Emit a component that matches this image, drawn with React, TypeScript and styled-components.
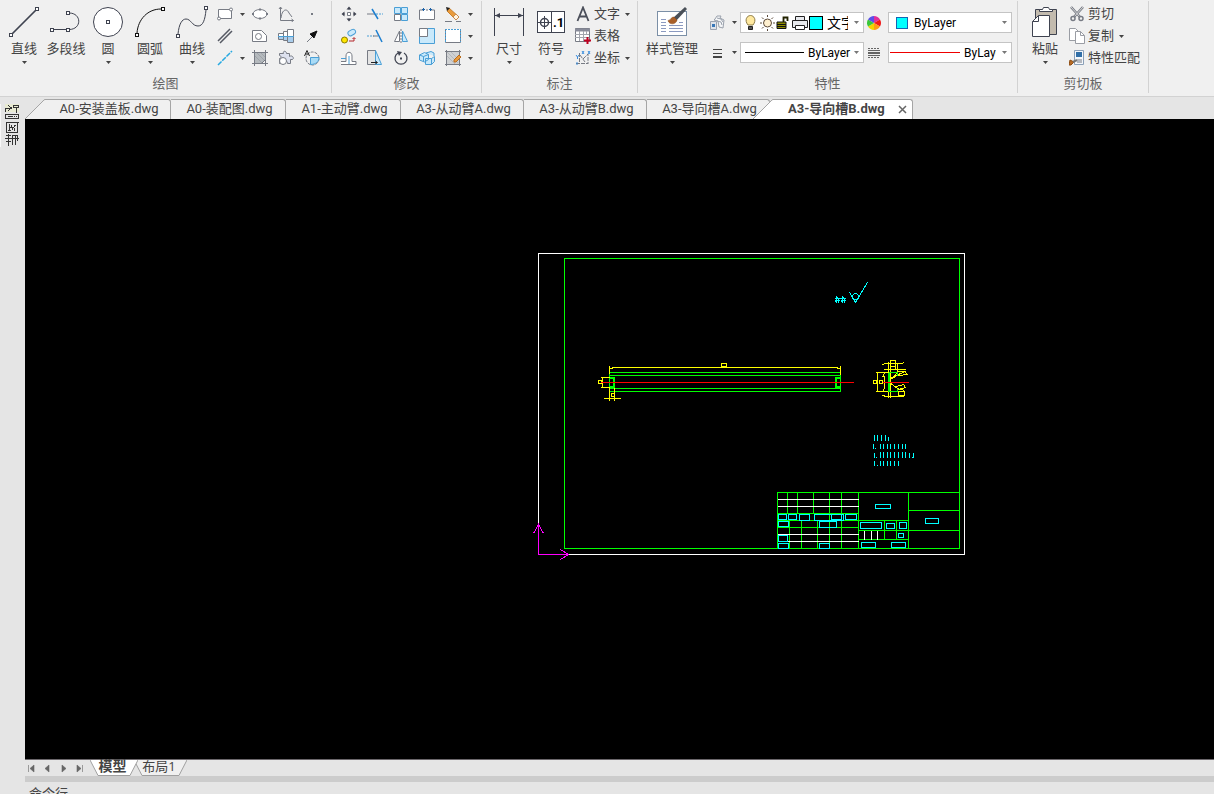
import React from "react";
import styled, { createGlobalStyle } from "styled-components";

const GlobalStyle = createGlobalStyle`
  * { box-sizing: border-box; }
  html, body { margin: 0; padding: 0; }
  body {
    font-family: "Open Sans", "Noto Sans CJK SC", sans-serif;
    font-size: 13px;
    color: #444;
    background: #e5e5e5;
  }
  button, select, input { font: inherit; color: inherit; margin: 0; }
  svg { display: block; flex: none; }
`;

const App = styled.div`
  display: flex;
  flex-direction: column;
  height: 100vh;
  overflow: hidden;
`;

/* ---------- ribbon ---------- */

const Ribbon = styled.header`
  display: flex;
  flex: none;
  background: #f0f0f0;
  border-bottom: 1px solid #d2d2d2;
  padding: 1px 0 3px;
`;

const Group = styled.section<{ $width: number; $inset: number }>`
  width: ${(p) => p.$width}px;
  padding-left: ${(p) => p.$inset}px;
  border-right: 1px solid #d2d2d2;
  display: flex;
  flex-direction: column;
`;

const GroupBody = styled.div`
  display: flex;
  height: 72px;
  padding-top: 2px;
`;

const GroupTitle = styled.h2<{ $inset: number }>`
  margin: 0 0 0 -${(p) => p.$inset}px;
  font-size: 13px;
  font-weight: 400;
  line-height: 20px;
  text-align: center;
  color: #666;
`;

const PlainButton = styled.button`
  background: none;
  border: 0;
  padding: 0;
  display: flex;
  align-items: center;
  white-space: nowrap;
`;

const BigButton = styled(PlainButton)<{ $width?: number }>`
  width: ${(p) => p.$width ?? 42}px;
  flex: none;
  flex-direction: column;
  align-items: center;
  padding-top: 3px;
  line-height: 20px;
  height: 64px;
`;

const BigCaret = styled.span`
  padding-top: 3px;
`;

const ToolGrid = styled.div<{ $columns: string }>`
  display: grid;
  grid-template-columns: ${(p) => p.$columns};
  grid-auto-rows: 22px;
  padding-left: 1px;
`;

const ToolCell = styled.div`
  display: flex;
  align-items: center;
  padding-left: 3px;
`;

const SplitButton = styled(PlainButton)`
  height: 22px;
  padding: 0 3px 0 7px;
`;

const RowList = styled.div`
  display: flex;
  flex-direction: column;
  margin-left: 3px;
`;

const RowButton = styled(PlainButton)`
  height: 22px;
  gap: 3px;
  span { padding-bottom: 4px; }
  svg + span + svg { margin-left: 2px; }
`;

const PropGrid = styled.div`
  display: grid;
  grid-template-columns: 38px 124px 24px 124px;
  grid-auto-rows: 21px;
  row-gap: 9px;
  padding-top: 9px;
`;

const PropTool = styled(PlainButton)<{ $split?: boolean }>`
  justify-content: ${(p) => (p.$split ? "flex-end" : "flex-start")};
  padding: 0 3px;
  gap: 7px;
`;

const Combo = styled.label<{ $inset?: number }>`
  display: flex;
  align-items: center;
  background: #fff;
  border: 1px solid #c4c4c4;
  padding: 0 4px 0 ${(p) => p.$inset ?? 4}px;
  color: #000;
  overflow: hidden;
`;

const ComboSelect = styled.select<{ $size?: number }>`
  appearance: none;
  flex: 1 1 0;
  min-width: 0;
  border: 0;
  padding: 0;
  background: transparent;
  font-family: Roboto, "Noto Sans CJK SC", sans-serif;
  font-size: ${(p) => p.$size ?? 12}px;
  line-height: 18px;
  height: 19px;
`;

const Swatch = styled.span<{ $edge: string; $size: number }>`
  flex: none;
  width: ${(p) => p.$size}px;
  height: ${(p) => p.$size}px;
  background: #0ff;
  border: 1px solid ${(p) => p.$edge};
  margin-right: ${(p) => (p.$size > 12 ? 4 : 6)}px;
`;

const LineSample = styled.span<{ $color: string; $width: number }>`
  flex: none;
  width: ${(p) => p.$width}px;
  height: 1px;
  background: ${(p) => p.$color};
  margin-right: 4px;
`;

const ComboCaret = styled.span`
  margin-left: 6px;
`;

/* ---------- work area ---------- */

const Workspace = styled.div`
  display: flex;
  flex: 1;
  min-height: 0;
`;

const Dock = styled.aside`
  width: 25px;
  flex: none;
  background: #e5e5e5;
  padding: 7px 0 0;
`;

const DockTab = styled(PlainButton)`
  width: 19px;
  height: 43px;
  border-left: 1px solid #f8f8f8;
  justify-content: flex-end;
`;

const Main = styled.main`
  flex: 1;
  min-width: 0;
  display: flex;
  flex-direction: column;
`;

const TabStrip = styled.nav`
  display: flex;
  flex: none;
  height: 22px;
  padding-top: 2px;
  background: #e5e5e5;
`;

const SlopeHolder = styled.span<{ $overlap?: number }>`
  margin-left: -${(p) => p.$overlap ?? 0}px;
  z-index: 1;
`;

const DocTab = styled(PlainButton)<{ $width: number }>`
  width: ${(p) => p.$width}px;
  flex: none;
  justify-content: center;
  height: 20px;
  padding: 0 0 2px 3px;
  line-height: 18px;
  background: #f0f0f0;
  border: 1px solid #a5a5a5;
  border-width: 1px 1px 0 0;
  border-radius: 0 3px 0 0;
  font-family: Roboto, "Noto Sans CJK SC", sans-serif;
`;

const ActiveDoc = styled.div`
  display: flex;
  z-index: 1;
  align-items: center;
  height: 20px;
  background: #fff;
  border: 1px solid #a5a5a5;
  border-width: 1px 1px 0 0;
  border-radius: 0 3px 0 0;
  width: 140px;
  padding: 0 5px 0 15px;
  justify-content: space-between;
`;

const ActiveDocName = styled(PlainButton)`
  font-family: Roboto, "Noto Sans CJK SC", sans-serif;
  font-weight: 700;
  line-height: 18px;
  padding-bottom: 2px;
`;

const Canvas = styled.div`
  flex: 1;
  min-height: 0;
  background: #000;
  svg { width: 100%; height: 100%; }
`;

const SheetBar = styled.nav`
  display: flex;
  flex: none;
  height: 17px;
  background: #e5e5e5;
  border-top: 1px solid #6b676b;
`;

const SheetNav = styled.div`
  display: flex;
  width: 65px;
  button { width: 16px; height: 17px; padding-right: 3px; justify-content: center; }
`;

const SheetTab = styled(PlainButton)<{ $width: number; $active?: boolean }>`
  position: relative;
  width: ${(p) => p.$width}px;
  height: 16px;
  margin-right: -4px;
  padding: 0 3px 4px 0;
  justify-content: center;
  line-height: 14px;
  z-index: ${(p) => (p.$active ? 1 : 0)};
  font-size: ${(p) => (p.$active ? 14 : 13)}px;
  font-weight: ${(p) => (p.$active ? 700 : 400)};
  > svg { position: absolute; left: 0; top: 0; z-index: -1; }
  isolation: isolate;
`;

const Splitter = styled.div`
  flex: none;
  height: 6px;
  background: #ccc;
`;

const CommandBar = styled.footer`
  flex: none;
  height: 12px;
  overflow: hidden;
  padding: 1px 4px 0;
  line-height: 20px;
`;

/* ---------- icons ---------- */

const INK = "#3f4350";
const BLUE = "#4a9fd6";
const PALE = "#c9e9fb";

const Caret = ({ color = "#444" }: { color?: string }) => (
  <svg width="5" height="3" viewBox="0 0 5 3"><path d="M0 0h5L2.5 3z" fill={color} /></svg>
);

const Big = ({ children }: { children: React.ReactNode }) => (
  <svg width="32" height="32" viewBox="0 0 32 32" fill="none" stroke={INK}>{children}</svg>
);

const Small = ({ children, ink = "#777b84" }: { children: React.ReactNode; ink?: string }) => (
  <svg width="16" height="16" viewBox="0 0 16 16" fill="none" stroke={ink}>{children}</svg>
);

const Knot = ({ x, y }: { x: number; y: number }) => (
  <rect x={x - 1.5} y={y - 1.5} width="3" height="3" fill="#fff" shapeRendering="crispEdges" />
);

const big = {
  line: <Big><path d="M3 29L29 3" strokeWidth="1.700" /><Knot x={29} y={3} /><Knot x={3} y={29} /></Big>,
  pline: <Big><path d="M2 23.500H18M19 7C32 7 32 23.500 19 23.500" /><Knot x={18} y={7} /><Knot x={2} y={24} /><Knot x={18} y={24} /></Big>,
  circle: <Big><circle cx="16" cy="16" r="14.500" fill="#fff" /><Knot x={16} y={16} /></Big>,
  arc: <Big><g stroke="#111"><path d="M3 27C4 13 14 3 27 3" /><Knot x={29} y={3} /><Knot x={3} y={29} /></g></Big>,
  spline: <Big><path d="M2 28C3 18 6 13 10 13C15 13 16 20 22 20C27 20 29 14 30 4" /><Knot x={30} y={2} /><Knot x={2} y={30} /></Big>,
  dim: <Big><path d="M1.500 2v28M30.500 2v28M2 9.500h28" /><path d="M2 9.500l5-2.500v5zM30 9.500l-5-2.500v5z" fill={INK} stroke="none" /></Big>,
  symbol: (
    <Big>
      <rect x="2.500" y="5.500" width="27" height="21" fill="#fff" />
      <path d="M16.500 5v22M3 16.500h13M9.500 10v13" /><circle cx="9.500" cy="16.500" r="4" strokeWidth="1.500" />
      <text x="18" y="21" fontSize="13" fontWeight="700" fill="#000" stroke="none" fontFamily="Roboto, sans-serif">.1</text>
    </Big>
  ),
  style: (
    <Big>
      <rect x="1.500" y="5.500" width="29" height="24" fill="#fff" stroke="#7b8fa6" />
      <path d="M5 13.500h5M5 16.500h5M5 19.500h5M5 22.500h5M5 25.500h5M13 19.500h14M13 22.500h14M13 25.500h14M23 16.500h4" stroke="#8b9ac0" />
      <path d="M29 1l-12 11 3 3L31 3z" fill="#4a5058" stroke="none" />
      <path d="M12 14.500c3 0 3-4 6-3.500l3 3c-1 5-8 5-9 .5z" fill="#a9602a" stroke="#8a4a1c" strokeWidth=".5" />
    </Big>
  ),
  paste: (
    <Big>
      <path d="M6.500 3.500h21v25h-21z" fill="#c3bbae" /><path d="M10.500 5.500v-2h3l1-2h5l1 2h3v2z" fill="#fff" />
      <path d="M9.500 9.500h11v21h-17v-15z" fill="#fff" /><path d="M9.500 9.500v6h-6" />
    </Big>
  ),
};

const ic = {
  rect: <Small><path d="M1.500 3.500h13v9h-13z" fill="#fff" /><circle cx="14" cy="3.500" r="1.500" fill="#fff" /><circle cx="2" cy="12.500" r="1.500" fill="#fff" /></Small>,
  ellipse: <Small><ellipse cx="8" cy="8" rx="7" ry="4.500" fill="#fff" /><path d="M7 3.500h2M7 12.500h2M1 7v2M15 7v2" strokeWidth="2" /></Small>,
  curve: <Small><path d="M2.500 1v13.500h13M1 3l1.500-2L4 3M13.500 13l2 1.500-2 1.500M3 12C4 3 9 2 11 7l3 4" /></Small>,
  point: <Small><path d="M7 8h2" strokeWidth="2" /></Small>,
  parallel: <Small ink="#555963"><path d="M1 13L13 1M3 15L15 3" strokeWidth="1.500" /></Small>,
  region: <Small><path d="M.5 2.500h9l5 5v6H.5z" fill="#fff" /><circle cx="6.500" cy="8.500" r="3" /></Small>,
  bolt: <Small><path d="M.5 5.500h5v6h-5zM5.500 3.500h4v9h-4zM9.500 1.500h6v13h-6z" fill="#fff" /><path d="M1 9h4v2H1zM6 9h3v3H6zM10 9h5v5h-5z" fill="#a9cdec" stroke="none" /><path d="M0 8.500h16" stroke={BLUE} /></Small>,
  leader: <Small><path d="M3 14l6-6" /><path d="M13 3L6 6l4 4z" fill="#111" stroke="#111" /></Small>,
  xline: <Small ink="#27a9e1"><path d="M1 15L15 1" strokeWidth="1.500" strokeDasharray="5 1" /></Small>,
  hatch: <Small><path d="M2.500 2.500h11v7l-4 4h-7z" fill="#b4b9bd" /><path d="M2.500 0v16M13.500 0v16M0 2.500h16M0 13.500h16" /><path d="M3 6l7 7M5 3l8 8M9 3l4 4" opacity=".35" /></Small>,
  gear: <Small><path d="M5.500 3.500c-1-3 3-3 3 0h3v3c3-2 5 2 3 3h-2v4h-3c1-3-4-3-3 0h-5v-5c2 0 2-3 0-3v-2z" fill="#dde1ee" /><circle cx="5" cy="11" r="3.500" fill="#fff" /></Small>,
  wipe: <Small><circle cx="8.500" cy="8.500" r="6.500" strokeDasharray="3 1" /><path d="M6.500 7.500H15c0 4-3 7-8.500 7z" fill="#a9dbf6" stroke={BLUE} /><path d="M.5 6L3 .5 5.500 6M1.500 4h3" stroke="#222" /></Small>,
  move: <Small><path d="M6.500 6.500h3v3h-3z" fill="#fff" /><path d="M8 2v2M8 12v2M2 8h2M12 8h2" /><path d="M8 .500l2.500 3h-5zM8 15.500l2.500-3h-5zM.5 8l3-2.500v5zM15.500 8l-3-2.500v5z" fill={INK} stroke="none" /></Small>,
  trim: <Small><path d="M0 8h8" /><path d="M9 8h7" strokeDasharray="2 1" stroke={BLUE} /><path d="M5 3l6 10" stroke="#1d7fd0" strokeWidth="1.500" /></Small>,
  array: <Small><path d="M1.500 1.500h6v6h-6zM8.500 1.500h6v6h-6zM8.500 8.500h6v6h-6z" fill={PALE} stroke={BLUE} /><path d="M1.500 8.500h6v6h-6z" fill="#fff" /></Small>,
  stretch: <Small><path d="M4 4H.5v9.500h15V4H12M7 4h2" fill="#fff" /><path d="M3 3.500h3M10 3.500h3M4.500 2v3M11.500 2v3" stroke="#1d62a8" /></Small>,
  erase: <Small><path d="M0 15.500h7M11 15.500h5" /><path d="M4 2l10 9-3 3L2 5z" fill="#e99b3c" stroke="#c9822f" /><path d="M1 1l4 1-3 3z" fill="#222" stroke="none" /><path d="M11 8l3 3-3 3-3-3z" fill="#fff3df" stroke="#c98a4b" /></Small>,
  copy: <Small><rect x="7" y="2" width="8" height="5" rx="2.500" fill={PALE} stroke={BLUE} transform="rotate(-30 11 5)" /><circle cx="3.500" cy="12" r="3" fill="#ffe600" stroke="#8a7c00" /><path d="M8 13h5v-3M11.500 11l1.500-1.500 1.500 1.500" stroke="#b3262b" /></Small>,
  extend: <Small><path d="M0 8h7" strokeDasharray="2 1" stroke={BLUE} /><path d="M6 8h5" /><path d="M9 2l6 12" stroke="#1d7fd0" strokeWidth="1.500" /></Small>,
  mirror: <Small><path d="M6.500 3v10.500h-5z" fill="#fff" /><path d="M9.500 3v10.500h5z" fill={PALE} stroke={BLUE} /><path d="M8 1v14" strokeDasharray="2 1" /></Small>,
  scale: <Small><path d="M.5.500h15v15H.5z" fill={PALE} stroke={BLUE} /><path d="M.5.500h8v8h-8z" fill="#fff" /></Small>,
  stretchBox: <Small><path d="M.5 1v13.500h15V1" fill="#fff" /><path d="M.5 14V1.500h15V14" strokeDasharray="2 1" stroke={BLUE} /></Small>,
  offset: <Small><path d="M0 14.500h15v-3h-4V6c0-5-6-5-6 0v5.500H0" fill="#fff" /><path d="M0 8.500h5M8 14V6" stroke={BLUE} /></Small>,
  taper: <Small><path d="M.5.500h8v14h-8z" fill="#e4e4e4" /><path d="M8.500.500l6 14h-6z" fill={PALE} stroke={BLUE} /><path d="M4 12.500h6M8.500 11l2 1.500-2 1.500" stroke="#222" /></Small>,
  rotate: <Small ink={INK}><path d="M5 3a6 6 0 1 0 6 0" strokeWidth="1.300" /><path d="M4 1l5 1-3 4z" fill={INK} stroke="none" /><path d="M7 8.500h2" strokeWidth="2" /></Small>,
  blocks: <Small ink={BLUE}><path d="M.5 5l5-2.500 4 2v5l-4 2.500-5-2zM6.500 8.500h6v6h-6zM12.500 8.500l3-2v5l-3 3M7 3l5-1.500 3 1.500v3" fill={PALE} /><path d="M.5 5l4 1.500v5M4.500 6.500l5-2" /></Small>,
  edit: <Small><path d="M1.500 1.500h13v13h-13z" fill="#cfd1d3" /><path d="M0 1.500h16M0 14.500h16M1.500 0v16M14.500 0v16" /><path d="M2 6l8 8M2 2l11 11M6 2l8 8" opacity=".3" /><path d="M14 5l-5 5v2h2l5-5z" fill="#e99b3c" stroke="#b86b1c" /></Small>,
  text: <Small ink="#4b4f5a"><path d="M2.500 15L8 1.500 13.500 15M4.500 10.500h7" strokeWidth="1.800" /></Small>,
  table: <Small><path d="M.5.500h14v13H.5z" fill="#fff" /><path d="M0 2h15" strokeWidth="3" stroke="#888b99" /><path d="M0 6.500h14M0 9.500h14M4.500 3v10M8.500 3v10M11.500 3v4" stroke="#a2a5ad" /><path d="M12.500 9v7M9 12.500h7" stroke="#c00020" strokeWidth="2" /></Small>,
  coord: <Small><path d="M4.500 3v11M1 13.500h12M5 5l5 7M8 9l5-5v10" strokeDasharray="4 1" /><path d="M1 5l1.500 2L4 5M2.500 7v2M7 1l2 3M9 1L7 4M13 1l2 3M15 1l-2 3M2 12v3" stroke="#3b8ede" /></Small>,
  layers: <Small><path d="M6 4l2-3h4l-1 2 4 2-1 8-4-1-1-6-4-1z" fill="#f5f6f8" stroke="#9aa1ac" /><path d="M8 3l4 1 2 3M8 6l4 1 1 3" stroke="#9aa1ac" /><path d="M1.500 6.500h6v8h-6z" fill="#dfe3ea" stroke="#9ba3b0" /><path d="M3 9h3v3H3z" fill="#3877b8" stroke="none" /></Small>,
  lines: <Small ink="#444"><path d="M4 4.500h9M4 8.500h9" /><path d="M4 12h9" strokeWidth="2" /></Small>,
  wheel: (
    <Small ink="none">
      <path d="M7 8V1a7 7 0 0 1 6 3.500z" fill="#e0309a" /><path d="M7 8l6-3.500a7 7 0 0 1 0 7z" fill="#f01818" /><path d="M7 8l6 3.500A7 7 0 0 1 7 15z" fill="#ff9b14" />
      <path d="M7 8v7a7 7 0 0 1-6-3.500z" fill="#f2d400" /><path d="M7 8l-6 3.500a7 7 0 0 1 0-7z" fill="#3ac83a" /><path d="M7 8L1 4.500A7 7 0 0 1 7 1z" fill="#5a50e8" />
    </Small>
  ),
  ltype: <Small ink="#666"><path d="M1 3.500h12M1 12.500h12" strokeDasharray="2 1" /><path d="M1 5.500h12M1 10.500h12" /><path d="M1 8h12" strokeWidth="2" /></Small>,
  cut: <Small><path d="M2 1l9 10M14 1L5 11" strokeWidth="2.600" /><path d="M2 1l9 10M14 1L5 11" strokeWidth=".8" stroke="#eee" /><circle cx="4" cy="12.500" r="2" strokeWidth="1.500" /><circle cx="12" cy="12.500" r="2" strokeWidth="1.500" /></Small>,
  copyPage: <Small ink="#9a9da4"><path d="M.5.500h6l3 3v9h-9z" fill="#fff" /><path d="M6.500 3.500h5l4 4v8h-9z" fill="#fff" /><path d="M11.500 3.500v4h4" /></Small>,
  match: <Small><path d="M5.500.500h9v14h-9z" fill="#f4f7fb" stroke="#8ba0b8" /><path d="M7 2h6v5H7z" fill="#316fa8" stroke="none" /><path d="M8 10h5M8 12h5" /><path d="M1 10l4 2-3 3H0z" fill="#b86c25" stroke="#8d4b12" /><path d="M4 12l4-2" strokeWidth="2" stroke="#777" /></Small>,
};

const LayerIcons = () => (
  <svg width="64" height="18" viewBox="0 0 64 18" fill="none" stroke="#222">
    <path d="M3 11C-1 6 2 1.500 5.500 1.500S12 6 8 11z" fill="#ffe9a0" stroke="#8c7a45" /><path d="M3.500 12.500h4v3h-4z" fill="#555" />
    <circle cx="22.500" cy="9" r="4" fill="#fff0cf" stroke="#5b4a3a" />
    <path d="M22.500 1v2M22.500 15v2M15 9h2M28 9h2M17 3.500l1.500 1.500M28 3.500L26.500 5M17 14.500l1.500-1.500M28 14.500L26.500 13" stroke="#5b4a3a" />
    <path d="M32 8h9v6.500h-9z" fill="#8c8a00" stroke="#111" /><path d="M32 10.500h9M32 12.500h9" stroke="#111" /><path d="M38.500 8V3.500h4V7" strokeWidth="1.800" stroke="#222200" />
    <path d="M50.500 6.500v-4h9v4M47.500 6.500h15v7h-15z" fill="#e8eaee" /><path d="M50.500 11.500h9v4h-9z" fill="#fff" />
  </svg>
);

const Slope = ({ fill }: { fill: string }) => (
  <svg width="20" height="20" viewBox="0 0 20 20"><path d="M0 20L18 1.500 20 .5V20z" fill={fill} /><path d="M0 20L18 2Q19 .5 20 .5" fill="none" stroke="#a5a5a5" /></svg>
);

const SheetShape = ({ width, fill }: { width: number; fill: string }) => (
  <svg width={width} height="17" viewBox={`0 0 ${width} 17`}>
    <path d={`M0 0L8 15.500H${width - 8}L${width} 0`} fill={fill} stroke="#a0a0a0" />
  </svg>
);

/* ---------- drawing ---------- */

const textMarks = [
  { y: 435, h: 6, xs: [874, 877, 881, 885] },
  { y: 437, h: 4, xs: [888] },
  { y: 444, h: 5, xs: [873, 880, 883, 887, 890, 894, 898, 902, 905] },
  { y: 448, h: 1, xs: [875] },
  { y: 452, h: 6, xs: [880, 883, 887, 890, 894, 898, 902, 905] },
  { y: 453, h: 5, xs: [874, 909, 913] },
  { y: 457, h: 1, xs: [876, 912] },
  { y: 461, h: 5, xs: [874, 880, 883, 887, 890, 894, 898] },
  { y: 465, h: 1, xs: [877] },
];

const titleCells = [
  [875, 504, 15, 4], [925, 518, 13, 5], [778, 514, 8, 5], [788, 514, 8, 5], [799, 514, 10, 6],
  [814, 514, 29, 6], [831, 514, 10, 5], [845, 514, 11, 5], [778, 521, 10, 5], [819, 521, 17, 6],
  [778, 535, 9, 6], [778, 543, 10, 5], [819, 543, 10, 5], [860, 522, 21, 6], [886, 523, 8, 5],
  [899, 522, 7, 6], [898, 533, 5, 4], [861, 542, 14, 5], [891, 542, 14, 5],
];

const Drawing = () => (
  <svg viewBox="24.5 118.5 1189 640" preserveAspectRatio="xMinYMin slice" fill="none" strokeWidth="1" shapeRendering="crispEdges" role="img" aria-label="A3-导向槽B">
    <rect x="538" y="253" width="426" height="301" stroke="#fff" />
    <rect x="564" y="258" width="395" height="290" stroke="#0f0" />
    <g stroke="#0f0">
      <path d="M777 548V492H959M787 492V513M797 492V513M813 492V513M829 492V548M841 492V513M841 520V548M789 520V548M801 520V548M817 520V548" />
      <path d="M858 492V548M908 492V548M777 513H858M777 520H908M777 527H858M858 530H959M858 539H908M908 510H959M884 520V539M896 520V539" />
    </g>
    <path d="M777 499H858M777 506H858M777 534H858M777 541H858M864 530V539M871 530V539M877 530V539" stroke="#fff" />
    <g stroke="#0ff">
      {titleCells.map(([x, y, w, h]) => <rect key={`${x}-${y}`} x={x} y={y} width={w} height={h} />)}
      {textMarks.map((r) => r.xs.map((x) => <path key={`${x}-${r.y}`} d={`M${x} ${r.y - 0.5}v${r.h}`} />))}
      <path d="M849 292L855 302L867 282M834 298H845M836 295V302M835 300H839M838 297V302M842 295V302M841 300H845M844 297V302M834 302L836 299M840 302L842 299M836 296L838 299M842 296L844 299" />
      <circle cx="855" cy="296" r="3" />
    </g>
    <path d="M538 554V524M533 533L538 524L543 533M538 554H568M560 549L568 554L560 559" stroke="#f0f" />
    <path d="M609 372H840M609 375H840M609 388H840M609 391H840M609 372V391M840 372V391" stroke="#0f0" />
    <g stroke="#ff0">
      <path d="M609 365V373M609 368H612V367H837V368H840M840 365V374M721 363H726V366H721z" />
      <path d="M600 377H609M600 387H609M602 377V387M598 380h3v3h-3zM609 387V400M614 387V400M611 393h3v3h-3zM603 398H620" />
      <path d="M877 372V391M875 372H888M875 391H888M884 373L882 376H884V388L882 391M873 380h3v3h-3zM879 380h3v3h-3z" />
      <path d="M888 361V397M890 363V397M897 363V374M882 364L885 363H901L904 362M883 369H905M890 360h5v6h-5zM882 395L886 396H901L905 395M890 366V369M895 366V369" />
      <path d="M889 379L895 376L904 371L907 374L898 375M897 371L905 371M890 378L900 373M889 382L897 388L904 390M896 386L903 384L905 387L898 389M898 391h6v4h-6zM893 376L897 372" />
    </g>
    <g stroke="#0f0">
      <path d="M609 377.500H614M609 386.500H614M839 377.500H836M839 386.500H836" strokeWidth="2" />
      <path d="M613.500 377V387M835.500 376V388" strokeWidth="2" />
      <path d="M888.500 372V391" strokeWidth="2" />
      <path d="M888 372H897V375M888 391H897V388" />
    </g>
    <path d="M600 382H853M882 382H908" stroke="#f00" />
  </svg>
);

/* ---------- page ---------- */

const BigTool = ({ icon, label, caret = true, width }: { icon: React.ReactNode; label: string; caret?: boolean; width?: number }) => (
  <BigButton type="button" $width={width}>{icon}<span>{label}</span>{caret && <BigCaret><Caret /></BigCaret>}</BigButton>
);

const Tool = ({ icon, label, caret }: { icon: React.ReactNode; label: string; caret?: boolean }) => (
  <ToolCell>
    <PlainButton type="button" aria-label={label}>{icon}</PlainButton>
    {caret && <SplitButton type="button" aria-label={`${label}选项`}><Caret /></SplitButton>}
  </ToolCell>
);

const RibbonGroup = ({ title, width, inset, children }: { title: string; width: number; inset: number; children: React.ReactNode }) => (
  <Group $width={width} $inset={inset}>
    <GroupBody>{children}</GroupBody>
    <GroupTitle $inset={inset}>{title}</GroupTitle>
  </Group>
);

const docs = [
  { name: "A0-安装盖板.dwg", width: 126 },
  { name: "A0-装配图.dwg", width: 115 },
  { name: "A1-主动臂.dwg", width: 115 },
  { name: "A3-从动臂A.dwg", width: 123 },
  { name: "A3-从动臂B.dwg", width: 123 },
  { name: "A3-导向槽A.dwg", width: 123 },
];

const navArrows = [
  { label: "第一个", d: "M1.500 1v7M7 1v7L3 4.500z" },
  { label: "上一个", d: "M6 1v7L2 4.500z" },
  { label: "下一个", d: "M3 1v7l4-3.500z" },
  { label: "最后一个", d: "M2 1v7l4-3.500zM7.500 1v7" },
];

export default function CadWindow() {
  return (
    <App>
      <GlobalStyle />
      <Ribbon>
        <RibbonGroup title="绘图" width={332} inset={3}>
          <BigTool icon={big.line} label="直线" />
          <BigTool icon={big.pline} label="多段线" caret={false} />
          <BigTool icon={big.circle} label="圆" />
          <BigTool icon={big.arc} label="圆弧" />
          <BigTool icon={big.spline} label="曲线" />
          <ToolGrid $columns="35px 26px 26px 26px">
            <Tool icon={ic.rect} label="矩形" caret />
            <Tool icon={ic.ellipse} label="椭圆" />
            <Tool icon={ic.curve} label="函数曲线" />
            <Tool icon={ic.point} label="点" />
            <Tool icon={ic.parallel} label="平行线" />
            <Tool icon={ic.region} label="面域" />
            <Tool icon={ic.bolt} label="轴" />
            <Tool icon={ic.leader} label="箭头" />
            <Tool icon={ic.xline} label="构造线" caret />
            <Tool icon={ic.hatch} label="填充" />
            <Tool icon={ic.gear} label="齿轮" />
            <Tool icon={ic.wipe} label="局部放大" />
          </ToolGrid>
        </RibbonGroup>

        <RibbonGroup title="修改" width={150} inset={5}>
          <ToolGrid $columns="26px 26px 26px 26px 36px">
            <Tool icon={ic.move} label="移动" />
            <Tool icon={ic.trim} label="修剪" />
            <Tool icon={ic.array} label="阵列" />
            <Tool icon={ic.stretch} label="打断" />
            <Tool icon={ic.erase} label="删除" caret />
            <Tool icon={ic.copy} label="复制对象" />
            <Tool icon={ic.extend} label="延伸" />
            <Tool icon={ic.mirror} label="镜像" />
            <Tool icon={ic.scale} label="缩放" />
            <Tool icon={ic.stretchBox} label="拉伸" caret />
            <Tool icon={ic.offset} label="偏移" />
            <Tool icon={ic.taper} label="倒角" />
            <Tool icon={ic.rotate} label="旋转" />
            <Tool icon={ic.blocks} label="分解" />
            <Tool icon={ic.edit} label="编辑" caret />
          </ToolGrid>
        </RibbonGroup>

        <RibbonGroup title="标注" width={156} inset={6}>
          <BigTool icon={big.dim} label="尺寸" />
          <BigTool icon={big.symbol} label="符号" />
          <RowList>
            <RowButton type="button">{ic.text}<span>文字</span><Caret /></RowButton>
            <RowButton type="button">{ic.table}<span>表格</span></RowButton>
            <RowButton type="button">{ic.coord}<span>坐标</span><Caret /></RowButton>
          </RowList>
        </RibbonGroup>

        <RibbonGroup title="特性" width={380} inset={4}>
          <BigTool icon={big.style} label="样式管理" width={60} />
          <PropGrid>
            <PropTool type="button" $split aria-label="图层">{ic.layers}<Caret /></PropTool>
            <Combo>
              <LayerIcons />
              <Swatch $edge="#000" $size={14} />
              <ComboSelect $size={14} aria-label="图层"><option>文字</option></ComboSelect>
              <ComboCaret><Caret color="#777" /></ComboCaret>
            </Combo>
            <PropTool type="button" aria-label="颜色">{ic.wheel}</PropTool>
            <Combo $inset={7}>
              <Swatch $edge="#1464b4" $size={12} />
              <ComboSelect aria-label="颜色"><option>ByLayer</option></ComboSelect>
              <ComboCaret><Caret color="#777" /></ComboCaret>
            </Combo>
            <PropTool type="button" $split aria-label="线宽">{ic.lines}<Caret /></PropTool>
            <Combo>
              <LineSample $color="#000" $width={59} />
              <ComboSelect aria-label="线宽"><option>ByLayer</option></ComboSelect>
              <Caret color="#777" />
            </Combo>
            <PropTool type="button" aria-label="线型">{ic.ltype}</PropTool>
            <Combo $inset={1}>
              <LineSample $color="#e00" $width={70} />
              <ComboSelect aria-label="线型"><option>ByLayer</option></ComboSelect>
              <ComboCaret><Caret color="#777" /></ComboCaret>
            </Combo>
          </PropGrid>
        </RibbonGroup>

        <RibbonGroup title="剪切板" width={131} inset={6}>
          <BigTool icon={big.paste} label="粘贴" />
          <RowList>
            <RowButton type="button">{ic.cut}<span>剪切</span></RowButton>
            <RowButton type="button">{ic.copyPage}<span>复制</span><Caret /></RowButton>
            <RowButton type="button">{ic.match}<span>特性匹配</span></RowButton>
          </RowList>
        </RibbonGroup>
      </Ribbon>

      <Workspace>
        <Dock>
          <DockTab type="button" aria-label="工具面板">
            <svg width="14" height="43" viewBox="0 0 14 43" fill="none" stroke="#333" shapeRendering="crispEdges">
              <path d="M0 0h14v8H0z" fill="#e8ead2" stroke="none" />
              <path d="M.5 8V4.500H5M3.500 1.500l3 2.500-3 2.500M8.500 1.500h5v2h-5zM11 3v6" />
              <path d="M.5 10.500h13v4H.5zM3 12.500h5M9.500 12v1M11.500 12v1" />
              <path d="M.5 18.500h13M1.500 18v10h11V18M4.500 20v5l2-3 1 3 3-4M3 26.500h3M9.500 24v3" />
              <path d="M0 34.500h14M3.500 30v12M1 31.500h5M7.500 31v10M10.500 31v10M12.500 31v6M1 37.500h5M7 31.500h6" />
            </svg>
          </DockTab>
        </Dock>
        <Main>
          <TabStrip>
            <SlopeHolder><Slope fill="#f0f0f0" /></SlopeHolder>
            {docs.map((d) => <DocTab type="button" key={d.name} $width={d.width}>{d.name}</DocTab>)}
            <SlopeHolder $overlap={17}><Slope fill="#fff" /></SlopeHolder>
            <ActiveDoc>
              <ActiveDocName type="button">A3-导向槽B.dwg</ActiveDocName>
              <PlainButton type="button" aria-label="关闭">
                <svg width="9" height="9" viewBox="0 0 9 9"><path d="M1 1l7 7M8 1L1 8" stroke="#666" strokeWidth="1.500" /></svg>
              </PlainButton>
            </ActiveDoc>
          </TabStrip>
          <Canvas><Drawing /></Canvas>
          <SheetBar>
            <SheetNav>
              {navArrows.map((a) => (
                <PlainButton type="button" key={a.label} aria-label={a.label}>
                  <svg width="9" height="9" viewBox="0 0 9 9"><path d={a.d} fill="#666" stroke="#666" strokeWidth=".6" /></svg>
                </PlainButton>
              ))}
            </SheetNav>
            <SheetTab type="button" $width={48} $active><SheetShape width={48} fill="#fff" />模型</SheetTab>
            <SheetTab type="button" $width={53}><SheetShape width={53} fill="#f0f0f0" />布局1</SheetTab>
          </SheetBar>
          <Splitter />
          <CommandBar>命令行</CommandBar>
        </Main>
      </Workspace>
    </App>
  );
}
